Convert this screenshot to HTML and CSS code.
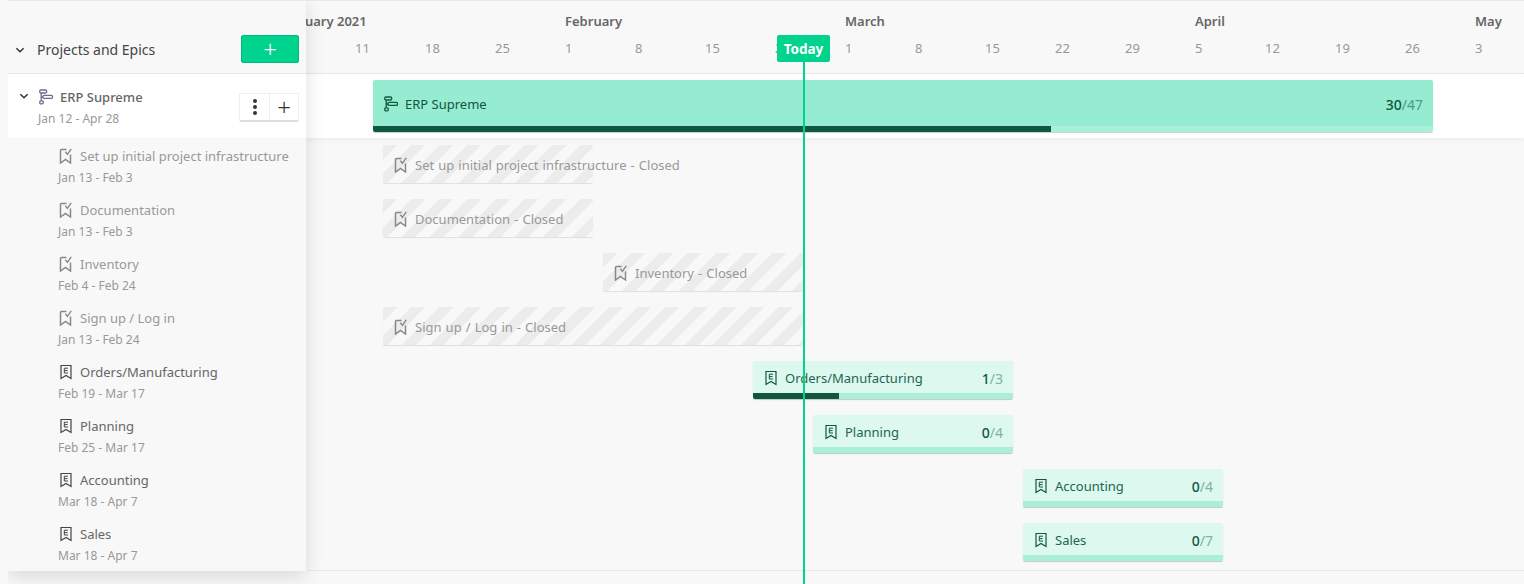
FILE: index.html
```html
<!DOCTYPE html>
<html lang="en">
<head>
    <meta charset="UTF-8">
    <meta name="viewport" content="width=device-width, initial-scale=1.0">
    <title>Roadmap</title>
    <link rel="stylesheet" href="styles.css">
</head>
<body>

    <svg class="icon-defs" aria-hidden="true">
        <symbol id="i-chevron" viewBox="0 0 10 10">
            <path d="M2 3.5 5 6.5 8 3.5" fill="none" stroke="currentColor" stroke-width="1.2"/>
        </symbol>
        <symbol id="i-project" viewBox="0 0 16 16">
            <g fill="none" stroke="currentColor" stroke-width="1.3">
                <rect x="1.7" y="1" width="7" height="3" rx="1.2"/>
                <rect x="5" y="6.4" width="9.5" height="3" rx="1.2"/>
                <rect x="1.7" y="11.8" width="3.6" height="3" rx="1.2"/>
                <path d="M3.2 4v7.8M3.2 8H5"/>
            </g>
        </symbol>
        <symbol id="i-closed" viewBox="0 0 16 16">
            <path d="M8.5 1.5H3.5a1 1 0 0 0-1 1V15L7.5 11.5l5 3.5V6.5" fill="none" stroke="currentColor" stroke-width="1.5"/>
            <path d="M7.4 3.8 9.4 6.4 13.2 0.8" fill="none" stroke="currentColor" stroke-width="1.4"/>
        </symbol>
        <symbol id="i-epic" viewBox="0 0 16 16">
            <path d="M3 1.5H13V14.5L8 11.5 3 14.5Z" fill="none" stroke="currentColor" stroke-width="1.2"/>
            <path d="M10 4.2H6.3V9H10M6.3 6.6H9.6" fill="none" stroke="currentColor" stroke-width="1"/>
        </symbol>
    </svg>

    <div class="gantt">
        <aside class="side">
            <div class="side-head">
                <svg class="chevron"><use href="#i-chevron"/></svg>
                <span class="side-title">Projects and Epics</span>
                <button class="add-btn">+</button>
            </div>

            <div class="project">
                <svg class="chevron small"><use href="#i-chevron"/></svg>
                <div class="project-info">
                    <div class="item-name strong"><svg class="icon project-icon"><use href="#i-project"/></svg>ERP Supreme</div>
                    <div class="item-date">Jan 12 - Apr 28</div>
                </div>
                <div class="btn-group">
                    <button class="tool-btn"><span class="dots"></span></button>
                    <button class="tool-btn plus">+</button>
                </div>
            </div>

            <div class="item closed">
                <div class="item-name"><svg class="icon"><use href="#i-closed"/></svg>Set up initial project infrastructure</div>
                <div class="item-date">Jan 13 - Feb 3</div>
            </div>
            <div class="item closed">
                <div class="item-name"><svg class="icon"><use href="#i-closed"/></svg>Documentation</div>
                <div class="item-date">Jan 13 - Feb 3</div>
            </div>
            <div class="item closed">
                <div class="item-name"><svg class="icon"><use href="#i-closed"/></svg>Inventory</div>
                <div class="item-date">Feb 4 - Feb 24</div>
            </div>
            <div class="item closed">
                <div class="item-name"><svg class="icon"><use href="#i-closed"/></svg>Sign up / Log in</div>
                <div class="item-date">Jan 13 - Feb 24</div>
            </div>
            <div class="item">
                <div class="item-name"><svg class="icon"><use href="#i-epic"/></svg>Orders/Manufacturing</div>
                <div class="item-date">Feb 19 - Mar 17</div>
            </div>
            <div class="item">
                <div class="item-name"><svg class="icon"><use href="#i-epic"/></svg>Planning</div>
                <div class="item-date">Feb 25 - Mar 17</div>
            </div>
            <div class="item">
                <div class="item-name"><svg class="icon"><use href="#i-epic"/></svg>Accounting</div>
                <div class="item-date">Mar 18 - Apr 7</div>
            </div>
            <div class="item">
                <div class="item-name"><svg class="icon"><use href="#i-epic"/></svg>Sales</div>
                <div class="item-date">Mar 18 - Apr 7</div>
            </div>
        </aside>

        <main class="chart">
            <div class="chart-head">
                <div class="months">
                    <span class="month jan">January 2021</span>
                    <span class="month feb">February</span>
                    <span class="month mar">March</span>
                    <span class="month apr">April</span>
                    <span class="month">May</span>
                </div>
                <div class="ticks">
                    <span>11</span><span>18</span><span>25</span><span>1</span><span>8</span><span>15</span><span>22</span>
                    <span>1</span><span>8</span><span>15</span><span>22</span><span>29</span>
                    <span>5</span><span>12</span><span>19</span><span>26</span><span>3</span>
                </div>
            </div>

            <div class="today">Today</div>

            <div class="project-row">
                <div class="bar project-bar" style="margin-left: 67px; width: 1060px">
                    <div class="bar-body">
                        <svg class="icon"><use href="#i-project"/></svg>
                        <span class="bar-name">ERP Supreme</span>
                        <span class="bar-count"><b>30</b>/47</span>
                    </div>
                    <div class="bar-progress"><div class="bar-done" style="width: 678px"></div></div>
                </div>
            </div>

            <div class="row">
                <div class="bar closed-bar" style="margin-left: 77px; width: 210px">
                    <svg class="icon"><use href="#i-closed"/></svg><span class="bar-name">Set up initial project infrastructure - Closed</span>
                </div>
            </div>
            <div class="row">
                <div class="bar closed-bar" style="margin-left: 77px; width: 210px">
                    <svg class="icon"><use href="#i-closed"/></svg><span class="bar-name">Documentation - Closed</span>
                </div>
            </div>
            <div class="row">
                <div class="bar closed-bar" style="margin-left: 297px; width: 200px">
                    <svg class="icon"><use href="#i-closed"/></svg><span class="bar-name">Inventory - Closed</span>
                </div>
            </div>
            <div class="row">
                <div class="bar closed-bar" style="margin-left: 77px; width: 420px">
                    <svg class="icon"><use href="#i-closed"/></svg><span class="bar-name">Sign up / Log in - Closed</span>
                </div>
            </div>
            <div class="row">
                <div class="bar epic-bar" style="margin-left: 447px; width: 260px">
                    <div class="bar-body">
                        <svg class="icon"><use href="#i-epic"/></svg>
                        <span class="bar-name">Orders/Manufacturing</span>
                        <span class="bar-count"><b>1</b>/3</span>
                    </div>
                    <div class="bar-progress"><div class="bar-done" style="width: 86px"></div></div>
                </div>
            </div>
            <div class="row">
                <div class="bar epic-bar" style="margin-left: 507px; width: 200px">
                    <div class="bar-body">
                        <svg class="icon"><use href="#i-epic"/></svg>
                        <span class="bar-name">Planning</span>
                        <span class="bar-count"><b>0</b>/4</span>
                    </div>
                    <div class="bar-progress"></div>
                </div>
            </div>
            <div class="row">
                <div class="bar epic-bar" style="margin-left: 717px; width: 200px">
                    <div class="bar-body">
                        <svg class="icon"><use href="#i-epic"/></svg>
                        <span class="bar-name">Accounting</span>
                        <span class="bar-count"><b>0</b>/4</span>
                    </div>
                    <div class="bar-progress"></div>
                </div>
            </div>
            <div class="row">
                <div class="bar epic-bar" style="margin-left: 717px; width: 200px">
                    <div class="bar-body">
                        <svg class="icon"><use href="#i-epic"/></svg>
                        <span class="bar-name">Sales</span>
                        <span class="bar-count"><b>0</b>/7</span>
                    </div>
                    <div class="bar-progress"></div>
                </div>
            </div>
        </main>
    </div>

</body>
</html>
```

FILE: styles.css
```css
* {
    box-sizing: border-box;
}
body {
    margin: 0;
    height: 584px;
    overflow: hidden;
    background: #f8f8f8;
    font-family: "Noto Sans", sans-serif;
    font-size: 13px;
    color: #333;
}
button {
    font-family: inherit;
    cursor: pointer;
    padding: 0;
}
.icon-defs {
    position: absolute;
    width: 0;
    height: 0;
}
.gantt {
    display: flex;
    margin-left: 8px;
    height: 571px;
    border-top: 1px solid #e8e8e8;
    border-bottom: 1px solid #e8e8e8;
}

/* left column */
.side {
    position: relative;
    z-index: 3;
    flex: 0 0 298px;
    height: 570px;
    background: #f8f8f8;
    box-shadow: 0 5px 18px rgba(0, 0, 0, 0.13);
    clip-path: inset(0 -30px -30px 0);
}
.side-head {
    display: flex;
    align-items: center;
    height: 72px;
    padding: 25px 7px 0 6px;
}
.chevron {
    width: 12px;
    height: 12px;
    color: #333;
}
.side-title {
    margin-left: 11px;
    font-size: 14px;
    color: #444;
}
.add-btn {
    margin-left: auto;
    margin-top: -2px;
    width: 58px;
    height: 28px;
    background: #00d38d;
    border: 1px solid #00b97b;
    border-radius: 2px;
    color: white;
    font-size: 24px;
    font-weight: 300;
    line-height: 22px;
}
.project {
    display: flex;
    height: 65px;
    padding: 13px 7px 0 10px;
    background: white;
    border-top: 1px solid #e8e8e8;
}
.chevron.small {
    margin-top: 3px;
}
.project-info {
    margin-left: 8px;
}
.project .item-date {
    margin-top: 3px;
}
.strong {
    color: #333;
    font-weight: 500;
}
.btn-group {
    display: flex;
    margin-left: auto;
    height: 29px;
    margin-top: 6px;
    border: 1px solid #eee;
    border-bottom: 2px solid #ddd;
    border-radius: 2px;
    background: white;
}
.tool-btn {
    width: 29px;
    background: white;
    border: 0;
    color: #333;
    font-size: 24px;
    font-weight: 300;
    line-height: 24px;
}
.tool-btn + .tool-btn {
    border-left: 1px solid #eee;
}
.dots {
    display: block;
    width: 4px;
    height: 4px;
    margin: 0 auto;
    border-radius: 50%;
    background: #333;
    box-shadow: 0 -6px 0 #333, 0 6px 0 #333;
}
.item {
    height: 54px;
    padding: 8px 0 0 50px;
}
.item-name {
    display: flex;
    align-items: center;
    line-height: 20px;
    color: #666;
}
.item-date {
    margin-top: 3px;
    font-size: 12px;
    line-height: 18px;
    color: #999;
}
.icon {
    flex: none;
    width: 16px;
    height: 16px;
    margin-right: 6px;
    color: #444;
}
.project .project-icon {
    color: #6b6f8f;
}
.closed .item-name {
    color: #999;
}
.closed .icon {
    color: #888;
}

/* timeline */
.chart {
    position: relative;
    flex: 1;
    min-width: 0;
}
.chart-head {
    height: 72px;
    padding-left: 49px;
}
.months {
    display: flex;
    padding-top: 11px;
    font-weight: 600;
    line-height: 18px;
    color: #666;
    white-space: nowrap;
}
.month {
    flex: none;
}
.jan {
    width: 280px;
    margin-left: -70px;
}
.feb {
    width: 280px;
}
.mar {
    width: 350px;
}
.apr {
    width: 280px;
}
.ticks {
    display: flex;
    margin-top: 9px;
    line-height: 18px;
    color: #999;
}
.ticks span {
    flex: 0 0 70px;
}
.today {
    position: absolute;
    z-index: 2;
    left: 471px;
    top: 34px;
    width: 53px;
    height: 27px;
    background: #00d38d;
    border-radius: 2px;
    color: white;
    font-size: 13.5px;
    font-weight: 700;
    line-height: 29px;
    text-align: center;
}
.today::after {
    content: "";
    position: absolute;
    left: 26px;
    top: 27px;
    width: 2px;
    height: 530px;
    background: #00d38d;
}
.project-row {
    height: 65px;
    padding-top: 6px;
    background: white;
    border-top: 1px solid #e8e8e8;
    box-shadow: 0 2px 5px rgba(0, 0, 0, 0.05);
}
.row {
    height: 54px;
    padding-top: 7px;
}
.bar {
    border-radius: 2px;
    overflow: hidden;
    box-shadow: 0 1px 1px rgba(0, 0, 0, 0.2);
}
.bar-body {
    display: flex;
    align-items: center;
    padding: 2px 10px 0 10px;
}
.bar-name {
    line-height: 20px;
    white-space: nowrap;
}
.bar-count {
    margin-left: auto;
    font-size: 14px;
    color: #7fb3a1;
}
.bar-count b {
    font-weight: 500;
    color: #10573f;
}
.bar-progress {
    height: 6px;
}
.bar-done {
    height: 100%;
    background: #10573f;
}
.project-bar {
    height: 52px;
}
.project-bar .bar-body {
    height: 46px;
    background: #96ecd0;
    color: #10573f;
}
.project-bar .icon {
    color: #10573f;
}
.project-bar .bar-progress {
    background: #aaf0d9;
}
.project-bar .bar-count {
    color: #4d9a80;
}
.epic-bar {
    height: 38px;
}
.epic-bar .bar-body {
    height: 32px;
    background: #dcf8ef;
    color: #1d6650;
}
.epic-bar .icon {
    color: #10573f;
}
.epic-bar .bar-progress {
    background: #aaf0d9;
}
.closed-bar {
    display: flex;
    align-items: center;
    height: 38px;
    padding: 2px 0 0 10px;
    overflow: visible;
    color: #999;
    word-spacing: 0.7px;
    background: repeating-linear-gradient(135deg, #ececec 0 10px, #f8f8f8 10px 20px);
    box-shadow: 0 1px 1px rgba(0, 0, 0, 0.1);
}
.closed-bar .icon {
    color: #888;
}
```
